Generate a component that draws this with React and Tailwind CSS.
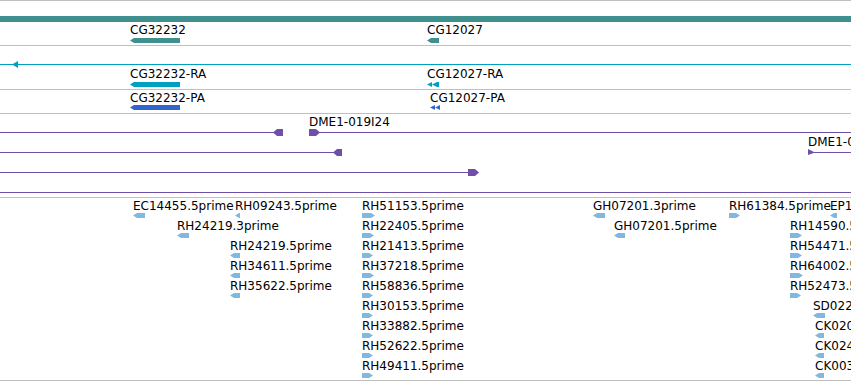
import React from 'react';

const font = "font-['DejaVu_Sans',sans-serif] text-[12px] leading-none text-black whitespace-nowrap";

const PURPLE = '#6f4fa8';
const EST = '#80b8e0';

// little arrow-shaped feature glyph
function Glyph({ w, h = 5, color, dir = 'left', double = false }) {
  const m = h / 2;
  const pts =
    dir === 'left'
      ? `0,${m} 4,0 ${w},0 ${w},${h} 4,${h}`
      : `0,0 ${w - 4},0 ${w},${m} ${w - 4},${h} 0,${h}`;
  return (
    <svg className="block shrink-0" width={w} height={h}>
      {double ? (
        <>
          <polygon points={`0,${m} 5,0 5,${h}`} fill={color} />
          <polygon points={`5,${m} 10,0 ${w},0 ${w},${h} 10,${h}`} fill={color} />
        </>
      ) : (
        <polygon points={pts} fill={color} />
      )}
    </svg>
  );
}

// a labelled feature, placed at its position on the track
function Feature({ x, y = 0, name, gap = 'gap-px', ...glyph }) {
  return (
    <div className={`absolute flex flex-col items-start ${gap}`} style={{ left: x, top: y }}>
      <span className={font}>{name}</span>
      <Glyph {...glyph} />
    </div>
  );
}

// horizontal clone line with an end glyph
function Line({ from = 0, to, top, color = PURPLE }) {
  return (
    <div
      className="absolute h-px"
      style={{ left: from, top, width: to == null ? undefined : to - from, right: to == null ? 0 : undefined, background: color }}
    />
  );
}

const estRows = [
  [
    [133, 'EC14455.5prime', 'left', 12],
    [235, 'RH09243.5prime', 'left', 5],
    [362, 'RH51153.5prime', 'right', 13],
    [593, 'GH07201.3prime', 'left', 12],
    [729, 'RH61384.5prime', 'right', 11],
    [830, 'EP1', 'left', 7],
  ],
  [
    [177, 'RH24219.3prime', 'left', 12],
    [362, 'RH22405.5prime', 'right', 12],
    [614, 'GH07201.5prime', 'left', 11],
    [790, 'RH14590.5prime', 'right', 12],
  ],
  [
    [230, 'RH24219.5prime', 'left', 10],
    [362, 'RH21413.5prime', 'right', 11],
    [790, 'RH54471.5prime', 'right', 12],
  ],
  [
    [230, 'RH34611.5prime', 'left', 10],
    [362, 'RH37218.5prime', 'right', 12],
    [790, 'RH64002.5prime', 'right', 13],
  ],
  [
    [230, 'RH35622.5prime', 'left', 10],
    [362, 'RH58836.5prime', 'right', 11],
    [790, 'RH52473.5prime', 'right', 11],
  ],
  [
    [362, 'RH30153.5prime', 'right', 11],
    [813, 'SD02271.5prime', 'left', 12],
  ],
  [
    [362, 'RH33882.5prime', 'right', 11],
    [815, 'CK02015.5prime', 'left', 9],
  ],
  [
    [362, 'RH52622.5prime', 'right', 11],
    [815, 'CK02416.5prime', 'left', 9],
  ],
  [
    [362, 'RH49411.5prime', 'right', 11],
    [815, 'CK00317.5prime', 'left', 9],
  ],
];

export default function App() {
  return (
    <div className="w-[851px] h-[381px] bg-white overflow-hidden flex flex-col border-t border-[#c0c0c0]">
      {/* genes */}
      <div className="relative h-[45px] shrink-0 border-b border-[#c0c0c0]">
        <div className="absolute left-0 right-0 top-[15px] h-[6px] bg-[#409090]" />
        <Feature x={130} y={23} gap="gap-[2px]" name="CG32232" w={50} color="#409090" />
        <Feature x={427} y={23} gap="gap-[2px]" name="CG12027" w={12} color="#409090" />
      </div>

      {/* transcripts */}
      <div className="relative h-[44px] shrink-0 border-b border-[#c0c0c0]">
        <Line top={18} color="#00a0c0" />
        <svg className="absolute left-[12px] top-[15px]" width="6" height="7">
          <polygon points="0,3.5 6,0 6,7" fill="#00a0c0" />
        </svg>
        <Feature x={130} y={22} gap="gap-[2px]" name="CG32232-RA" w={50} color="#00a0c0" />
        <Feature x={427} y={22} gap="gap-[2px]" name="CG12027-RA" w={12} color="#00a0c0" double />
      </div>

      {/* proteins */}
      <div className="relative h-[24px] shrink-0 border-b border-[#c0c0c0]">
        <Feature x={130} y={2} name="CG32232-PA" w={50} color="#3366cc" />
        <Feature x={430} y={2} name="CG12027-PA" w={10} color="#3366cc" double />
      </div>

      {/* clones */}
      <div className="relative h-[84px] shrink-0 border-b border-[#c0c0c0]">
        <Line to={276} top={18} />
        <div className="absolute left-[273px] top-[15px]">
          <Glyph w={10} h={7} color={PURPLE} />
        </div>
        <Feature x={309} y={2} gap="gap-px" name="DME1-019I24" w={11} h={7} color={PURPLE} dir="right" />
        <Line from={318} top={18} />

        <Line to={336} top={38} />
        <div className="absolute left-[333px] top-[35px]">
          <Glyph w={9} h={7} color={PURPLE} />
        </div>
        <div className="absolute left-[808px] top-[22px] flex flex-col gap-px">
          <span className={font}>DME1-019K13</span>
          <svg className="block" width="7" height="6">
            <polygon points="0,0 7,3.5 0,6" fill={PURPLE} />
          </svg>
        </div>
        <Line from={812} top={38} />

        <Line to={472} top={58} />
        <div className="absolute left-[468px] top-[55px]">
          <Glyph w={11} h={7} color={PURPLE} dir="right" />
        </div>

        <Line top={78} />
      </div>

      {/* ESTs */}
      <div className="flex-1 flex flex-col pt-[2px] border-b border-[#c0c0c0]">
        {estRows.map((row, i) => (
          <div key={i} className="relative h-[20px] shrink-0">
            {row.map(([x, name, dir, w]) => (
              <Feature key={x} x={x} name={name} w={w} color={EST} dir={dir} />
            ))}
          </div>
        ))}
      </div>
    </div>
  );
}
